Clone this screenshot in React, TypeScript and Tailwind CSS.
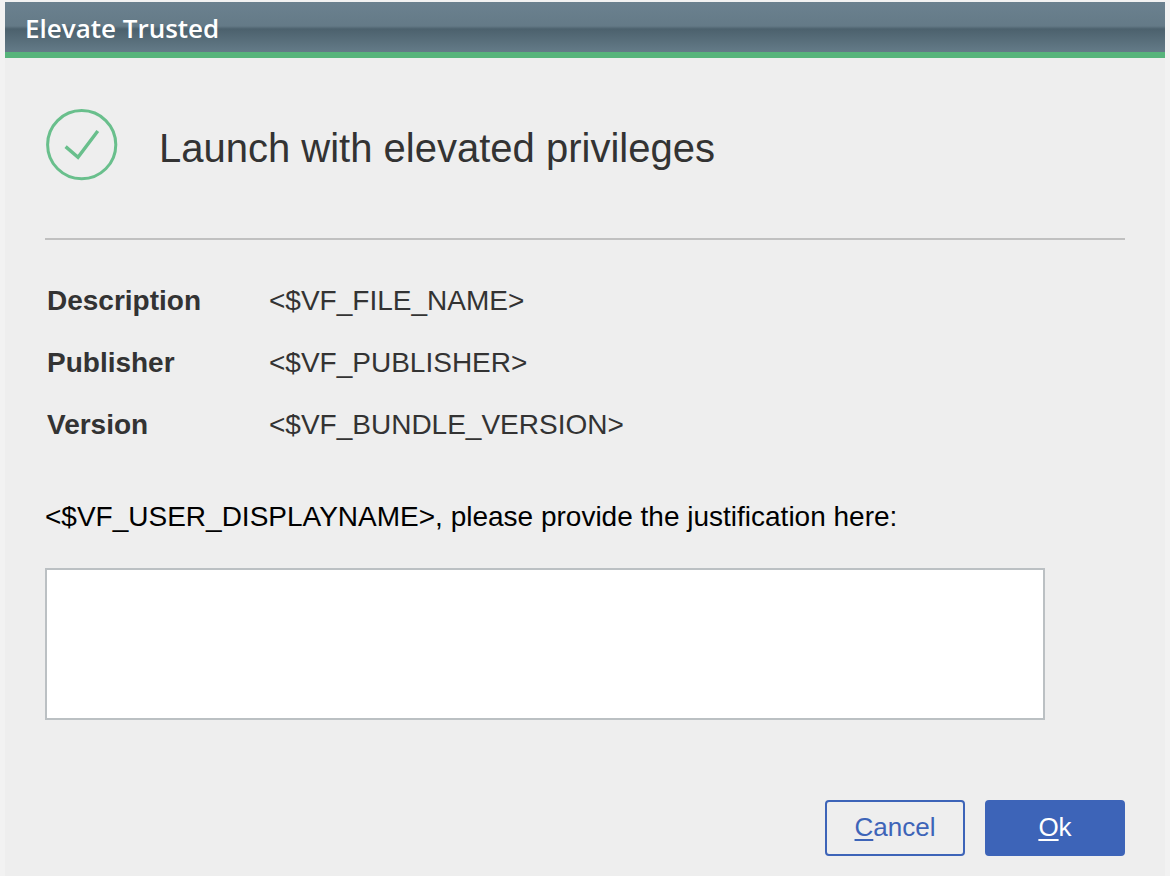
const details = [
  { label: "Description", value: "<$VF_FILE_NAME>" },
  { label: "Publisher", value: "<$VF_PUBLISHER>" },
  { label: "Version", value: "<$VF_BUNDLE_VERSION>" },
];

function CheckCircle() {
  return (
    <svg
      viewBox="0 0 74 74"
      className="size-[74px] shrink-0"
      fill="none"
      stroke="#69bf8c"
      strokeWidth="3"
      aria-hidden="true"
    >
      <circle cx="36.7" cy="36.7" r="34.1" />
      <path d="M20.6 38.6 L33 49.2 L52.8 23" strokeWidth="3.4" />
    </svg>
  );
}

export default function App() {
  return (
    <div className="min-h-screen bg-[#f2f2f2] px-[5px] pt-0.5 font-['Liberation_Sans',Arial,sans-serif] text-[#333333]">
      <main className="flex min-h-[calc(100vh-2px)] flex-col bg-[#eeeeee]">
        <header className="border-b-6 border-[#57b47b] bg-[linear-gradient(to_bottom,#6b818f_0%,#647a87_48%,#4c616d_54%,#647b88_100%)] px-5 pt-2 pb-1.5">
          <h1 className="font-['Open_Sans',sans-serif] text-[26px] leading-9 font-semibold text-white">
            Elevate Trusted
          </h1>
        </header>

        <section className="px-10 pt-[50px] pb-5">
          <div className="flex items-center gap-10 border-b-2 border-[#c0c0c0] pb-14">
            <CheckCircle />
            <h2 className="pt-1.5 text-[40px] leading-12">Launch with elevated privileges</h2>
          </div>

          <dl className="grid grid-cols-[222px_1fr] gap-y-[30px] px-0.5 pt-[45px] text-[28px] leading-8">
            {details.map(({ label, value }) => (
              <div key={label} className="contents">
                <dt className="font-bold">{label}</dt>
                <dd>{value}</dd>
              </div>
            ))}
          </dl>

          <form onSubmit={(event) => event.preventDefault()}>
            <label htmlFor="justification" className="block pt-15 text-[28px] leading-8 text-black">
              {"<$VF_USER_DISPLAYNAME>, please provide the justification here:"}
            </label>
            <div className="pt-[35px] pr-20">
              <textarea
                id="justification"
                className="block h-38 w-full resize-none border-2 border-[#bbc0c3] bg-white p-2 text-[28px] leading-8 outline-none"
              />
            </div>
            <div className="flex justify-end gap-5 pt-20 text-[26px] leading-8">
              <button
                type="button"
                className="h-14 w-35 rounded-sm border-2 border-[#3d64b8] pb-0.5 text-[#3d64b8]"
              >
                <span className="underline decoration-2 underline-offset-3">C</span>ancel
              </button>
              <button
                type="submit"
                className="h-14 w-35 rounded-sm border-2 border-[#3d64b8] bg-[#3d64b8] pb-0.5 text-white"
              >
                <span className="underline decoration-2 underline-offset-3">O</span>k
              </button>
            </div>
          </form>
        </section>
      </main>
    </div>
  );
}
